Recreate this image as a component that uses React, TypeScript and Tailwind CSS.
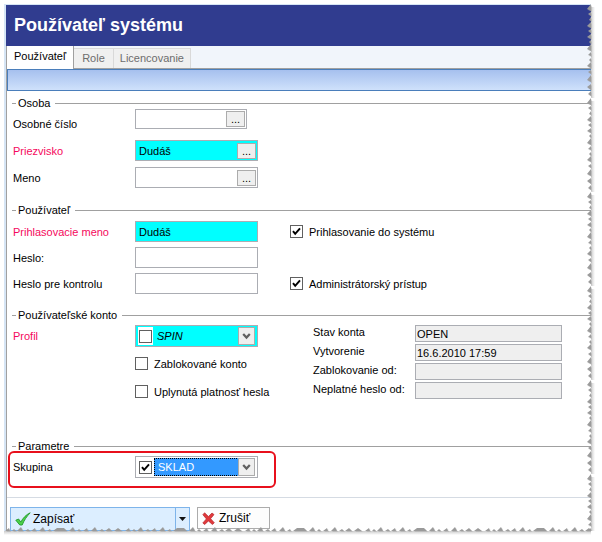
import { useState } from "react";
import type { ReactNode } from "react";

const fieldBorder = "border border-[#abadb3]";

function Group({ title, className = "", children }: { title: string; className?: string; children: ReactNode }) {
  return (
    <section className={className}>
      <div className="flex items-center pl-[5px] h-3">
        <span className="w-1 h-px bg-[#a0a0a0]" />
        <h2 className="pl-[2px] pr-[5px] leading-3">{title}</h2>
        <span className="flex-1 h-px bg-[#a0a0a0]" />
      </div>
      {children}
    </section>
  );
}

function Label({ id, required, children }: { id: string; required?: boolean; children: ReactNode }) {
  return (
    <label htmlFor={id} className={`w-[122px] shrink-0 leading-4 ${required ? "text-[#f5085c]" : ""}`}>
      {children}
    </label>
  );
}

// text box, optionally with the "..." lookup button
function TextField({ id, value = "", type = "text", lookup, required, narrow }: { id: string; value?: string; type?: string; lookup?: boolean; required?: boolean; narrow?: boolean }) {
  return (
    <div className={`flex items-center ${fieldBorder} ${required ? "bg-[#00ffff]" : "bg-white"} ${narrow ? "w-28 h-5" : "w-[123px] h-[21px]"}`}>
      <input id={id} type={type} defaultValue={value} className="flex-1 min-w-0 h-full pl-[3px] bg-transparent outline-none" />
      {lookup && (
        <button type="button" aria-label="..." className="w-[19px] h-4 mr-px shrink-0 border border-[#acacac] bg-[#efefef] leading-3">
          ...
        </button>
      )}
    </div>
  );
}

function CheckBox({ id, checked = false, label }: { id: string; checked?: boolean; label?: string }) {
  const [on, setOn] = useState(checked);
  return (
    <span className="relative block w-[13px] h-[13px] shrink-0">
      <input id={id} type="checkbox" aria-label={label} checked={on} onChange={() => setOn(!on)} className="block w-[13px] h-[13px] appearance-none border border-[#606060] bg-white" />
      {on && (
        <svg viewBox="0 0 13 13" className="absolute inset-0 w-[13px] h-[13px] pointer-events-none">
          <path d="M3 6.2 5.2 8.8 10 3.4" fill="none" stroke="#000" strokeWidth="2" />
        </svg>
      )}
    </span>
  );
}

function Check({ id, checked, children }: { id: string; checked?: boolean; children: ReactNode }) {
  return (
    <div className="flex items-center gap-[6px] h-[13px]">
      <CheckBox id={id} checked={checked} />
      <label htmlFor={id} className="leading-4">
        {children}
      </label>
    </div>
  );
}

function Combo({ id, value, checked, required }: { id: string; value: string; checked?: boolean; required?: boolean }) {
  return (
    <div className={`relative flex items-center w-[123px] h-[22px] ${fieldBorder} ${required ? "bg-[#00ffff]" : "bg-white"}`}>
      <span className="flex items-center justify-center w-[15px] h-[18px] ml-[2px] bg-white">
        <CheckBox id={`${id}-on`} checked={checked} label={value} />
      </span>
      <select
        id={id}
        className={`w-[85px] h-[18px] ml-px pl-[3px] appearance-none outline-none leading-4 ${required ? "italic bg-transparent" : "bg-[#3399ff] text-white border border-dotted border-black"}`}
      >
        <option>{value}</option>
      </select>
      <span className="absolute right-[2px] top-px flex items-center justify-center w-[17px] h-[18px] border border-[#acacac] bg-[#efefef] pointer-events-none">
        <svg viewBox="0 0 9 7" className="w-[9px] h-[7px]">
          <path d="M1.2 1 4.5 4.6 7.8 1" fill="none" stroke="#606060" strokeWidth="2.2" />
        </svg>
      </span>
    </div>
  );
}

function ReadOnly({ id, label, value = "" }: { id: string; label: string; value?: string }) {
  return (
    <div className="flex items-center h-[17px]">
      <label htmlFor={id} className="w-[102px] leading-[14px] pb-[3px]">
        {label}
      </label>
      <input id={id} readOnly value={value} className={`w-[147px] h-[17px] px-px outline-none bg-[#efefef] ${fieldBorder}`} />
    </div>
  );
}

// torn paper edges along the right and the bottom
function TornRight() {
  const teeth = "M5 0 1 5 5 7Z M5 8 2 10 5 12Z M5 13 3 16 5 17Z M5 18 1 22 5 24Z M5 25 2 27 5 29Z M5 30 1 33 5 35Z M5 36 3 38 5 40Z M5 40 1 45 5 47Z M5 48 2 51 5 52Z M5 54 3 56 5 58Z M5 58 1 62 5 64Z M5 66 2 68 5 70Z M5 71 1 76 5 78Z M5 80 1 83 5 86Z M5 87 2 90 5 92Z";
  return (
    <svg aria-hidden="true" className="absolute right-0 top-1 bottom-[11px] w-4 h-[calc(100%-15px)] pointer-events-none">
      <defs>
        <linearGradient id="shade-right">
          <stop offset="0" stopColor="#b4b4b4" />
          <stop offset="1" stopColor="#fff" />
        </linearGradient>
        <pattern id="torn-right" width="16" height="94" patternUnits="userSpaceOnUse">
          <path d="M5 0H16V94H5Z" fill="#fff" />
          <path d="M5 3H9V94H5Z" fill="url(#shade-right)" opacity="0.7" />
          <path d={teeth} fill="#9a9a9a" />
          <path d={teeth} fill="#9a9a9a" opacity="0.4" transform="translate(1 1)" />
        </pattern>
      </defs>
      <rect width="16" height="100%" fill="url(#torn-right)" />
    </svg>
  );
}

function TornBottom() {
  const teeth = "M1 5 5 2 6 5Z M8 5 10 3 12 5Z M13 5 17 1 19 5Z M21 5 24 3 26 5Z M27 5 31 2 32 5Z M35 5 39 1 41 5Z M43 5 46 3 47 5Z M49 5 53 2 60 2 63 5Z M65 5 69 1 71 5Z M73 5 75 3 77 5Z M79 5 83 2 84 5Z M87 5 91 1 93 5Z M95 5 98 3 100 5Z M101 5 105 2 108 5Z M110 5 114 2 118 5Z";
  return (
    <svg aria-hidden="true" className="absolute bottom-0 left-1 w-[calc(100%-15px)] h-4 pointer-events-none">
      <defs>
        <linearGradient id="shade-bottom" x2="0" y2="1">
          <stop offset="0" stopColor="#b4b4b4" />
          <stop offset="1" stopColor="#fff" />
        </linearGradient>
        <pattern id="torn-bottom" width="120" height="16" patternUnits="userSpaceOnUse">
          <path d="M0 5H120V16H0Z" fill="#fff" />
          <path d="M0 5H120V9H0Z" fill="url(#shade-bottom)" opacity="0.7" />
          <path d={teeth} fill="#9a9a9a" />
          <path d={teeth} fill="#9a9a9a" opacity="0.4" transform="translate(1 1)" />
        </pattern>
      </defs>
      <rect width="100%" height="16" fill="url(#torn-bottom)" />
    </svg>
  );
}

export default function App() {
  return (
    <div className="relative overflow-hidden bg-white pt-1 pl-1 pb-[11px] font-['Liberation_Sans',Arial,sans-serif] text-[11px] text-black">
      <div className="mr-[11px] border-l-2 border-t border-[#d6e5f5]">
        <header className="flex items-center h-[41px] pl-2 bg-[#303c8f]">
          <h1 className="text-lg leading-6 pb-px font-bold text-white">Používateľ systému</h1>
        </header>

        <main className="border-l border-[#a0a0a0]">
          <nav className="flex items-end h-[23px] bg-[#f1f5fb] border-b border-[#a0a0a0]">
            <button className="relative h-[23px] -mb-px px-[7px] pb-[2px] bg-white border-r border-[#a0a0a0]">Používateľ</button>
            <button className="h-5 px-2 bg-[#f0f0f0] border-t border-r border-[#d9d9d9] text-[#6d6d6d]">Role</button>
            <button className="h-5 px-[6px] bg-[#f0f0f0] border-t border-r border-[#d9d9d9] text-[#6d6d6d]">Licencovanie</button>
          </nav>
          <div className="h-[22px] border border-r-0 border-[#4a7ebb] bg-linear-to-b from-[#a6c0ee] to-[#cfe1fb]" />

          <Group title="Osoba" className="mt-[6px]">
            <div className="flex flex-col gap-[6px] pl-[6px]">
              <div className="flex h-[25px]">
                <div className="flex items-center pt-[5px]">
                  <Label id="cislo">Osobné číslo</Label>
                </div>
                <TextField id="cislo" lookup narrow />
              </div>
              <div className="flex items-center">
                <Label id="priezvisko" required>Priezvisko</Label>
                <TextField id="priezvisko" value="Dudáš" lookup required />
              </div>
              <div className="flex items-center">
                <Label id="meno">Meno</Label>
                <TextField id="meno" lookup />
              </div>
            </div>
          </Group>

          <Group title="Používateľ" className="mt-4">
            <div className="flex flex-col gap-[5px] pl-[6px] pt-[5px]">
              <div className="flex items-center">
                <Label id="login" required>Prihlasovacie meno</Label>
                <TextField id="login" value="Dudáš" required />
                <div className="pl-8">
                  <Check id="prihlasovanie" checked>Prihlasovanie do systému</Check>
                </div>
              </div>
              <div className="flex items-center">
                <Label id="heslo">Heslo:</Label>
                <TextField id="heslo" type="password" />
              </div>
              <div className="flex items-center">
                <Label id="heslo2">Heslo pre kontrolu</Label>
                <TextField id="heslo2" type="password" />
                <div className="pl-8">
                  <Check id="admin" checked>Administrátorský prístup</Check>
                </div>
              </div>
            </div>
          </Group>

          <Group title="Používateľské konto" className="mt-[15px]">
            <div className="flex pl-[6px] pt-1">
              <div className="w-[300px]">
                <div className="flex items-center">
                  <Label id="profil" required>Profil</Label>
                  <Combo id="profil" value="SPIN" required />
                </div>
                <div className="flex flex-col gap-[15px] pl-[122px] pt-[10px]">
                  <Check id="zablokovane">Zablokované konto</Check>
                  <Check id="uplynuta">Uplynutá platnosť hesla</Check>
                </div>
              </div>
              <div className="flex flex-col gap-[2px]">
                <ReadOnly id="stav" label="Stav konta" value="OPEN" />
                <ReadOnly id="vytvorenie" label="Vytvorenie" value="16.6.2010 17:59" />
                <ReadOnly id="zablokovanie" label="Zablokovanie od:" />
                <ReadOnly id="neplatne" label="Neplatné heslo od:" />
              </div>
            </div>
          </Group>

          <Group title="Parametre" className="mt-[41px]">
            <div className="w-[268px] h-[37px] ml-px -mt-px pl-[3px] pt-[3px] border-2 border-[#e8101c] rounded-md">
              <div className="flex items-center">
                <Label id="skupina">Skupina</Label>
                <Combo id="skupina" value="SKLAD" checked />
              </div>
            </div>
          </Group>

          <footer className="flex gap-[7px] mt-[9px] pl-[3px] pt-[9px] border-t border-[#d5dbe3]">
            <div className="flex w-[180px] h-6 border border-[#7eb4ea] bg-[#dceeff]">
              <button className="flex-1 flex items-center gap-[2px] pl-1 text-xs">
                <svg viewBox="0 0 16 14" className="w-4 h-[14px]">
                  <path d="M.8 8.2 3.6 7l2.2 3.1C8 6 11 2.700 15.200.8 11.600 4.500 9 8.500 7.200 13H4.800Z" fill="#4ed14a" stroke="#1f9a2c" strokeWidth=".9" strokeLinejoin="round" />
                </svg>
                Zapísať
              </button>
              <button aria-label="▾" className="flex items-center justify-center w-[14px] border-l border-[#7eb4ea]">
                <svg viewBox="0 0 7 4" className="w-[7px] h-1">
                  <path d="M0 0h7L3.500 4Z" fill="#111" />
                </svg>
              </button>
            </div>
            <button className="flex items-center gap-1 w-[73px] h-[22px] pl-1 text-xs bg-[#fdfdfd] border border-[#acacac]">
              <svg viewBox="0 0 13 13" className="w-[13px] h-[13px]">
                <path d="M2.600.8 6.400 4.500 10 1l2 1.600L8.600 6.700 12.300 10.800 10.400 12.500 6.400 8.900 2.800 12.500.8 11 4.400 6.900.9 2.700Z" fill="#e0393b" stroke="#b5242a" strokeWidth=".7" strokeLinejoin="round" />
              </svg>
              Zrušiť
            </button>
          </footer>
        </main>
      </div>
      <TornRight />
      <TornBottom />
    </div>
  );
}
